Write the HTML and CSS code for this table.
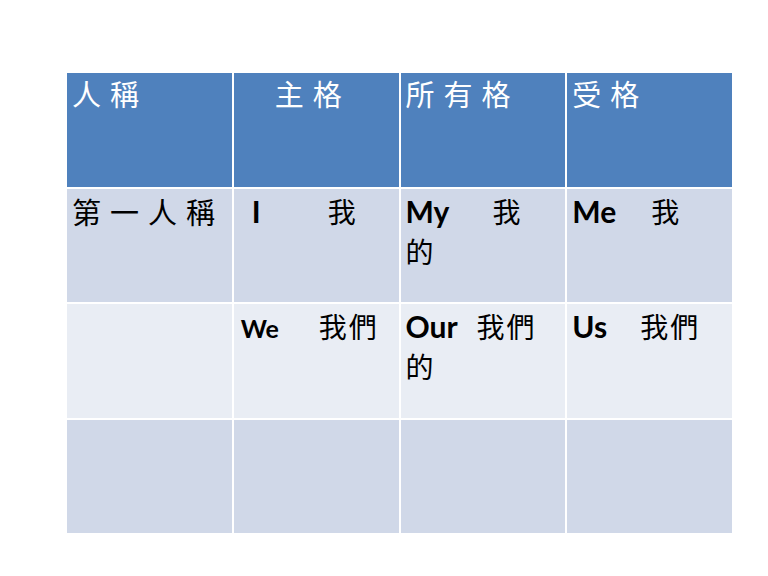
FILE: index.html
```html
<!DOCTYPE html>
<html lang="zh-Hant">
<head>
<meta charset="utf-8">
<link rel="stylesheet" href="styles.css">
</head>
<body>
<div class="slide">
  <table class="grid">
    <tr class="head">
      <td>人稱</td>
      <td><span class="lead"></span>主格</td>
      <td>所有格</td>
      <td>受格</td>
    </tr>
    <tr class="band1">
      <td class="wide">第一人稱</td>
      <td><span class="en i">I</span><span class="zh">我</span></td>
      <td><span class="en my">My</span><span class="zh">我</span><br><span class="zh">的</span></td>
      <td><span class="en me">Me</span><span class="zh">我</span></td>
    </tr>
    <tr class="band2">
      <td></td>
      <td><span class="en small we">We</span><span class="zh">我們</span></td>
      <td><span class="en our">Our</span><span class="zh">我們</span><br><span class="zh">的</span></td>
      <td><span class="en us">Us</span><span class="zh">我們</span></td>
    </tr>
    <tr class="band1">
      <td></td><td></td><td></td><td></td>
    </tr>
  </table>
</div>
</body>
</html>
```

FILE: styles.css
```css
html, body {
  margin: 0;
  padding: 0;
  background: #ffffff;
}
body {
  width: 768px;
  height: 576px;
  overflow: hidden;
  font-family: "Noto Sans CJK TC", "Noto Sans", sans-serif;
}
.slide {
  padding: 71px 0 0 65px;
}
.grid {
  border-collapse: collapse;
  table-layout: fixed;
  width: 667px;
}
.grid td {
  width: 166.75px;
  height: 115.5px;
  box-sizing: border-box;
  border: 2px solid #ffffff;
  vertical-align: top;
  padding: 2px 5px;
  font-size: 28px;
  line-height: 40px;
  color: #000000;
  letter-spacing: 2px;
  white-space: nowrap;
}
.head td {
  background: #4f81bd;
  color: #ffffff;
  font-size: 29px;
  line-height: 40px;
  letter-spacing: 9px;
  padding-top: 0;
}
.band1 td {
  background: #d0d8e8;
}
.band2 td {
  background: #e9edf4;
}
.lead {
  display: inline-block;
  width: 36px;
}
.grid td.wide {
  font-size: 29px;
  letter-spacing: 9px;
}
.en {
  display: inline-block;
  font-family: Lato, "Liberation Sans", sans-serif;
  font-weight: 700;
  font-size: 30px;
  letter-spacing: 0;
}
.en.small {
  font-size: 25px;
}
.i { margin-left: 13px; width: 76px; }
.my { width: 87px; }
.me { width: 79px; }
.we { margin-left: 2px; width: 78px; }
.our { width: 71px; }
.us { width: 68px; }
```
